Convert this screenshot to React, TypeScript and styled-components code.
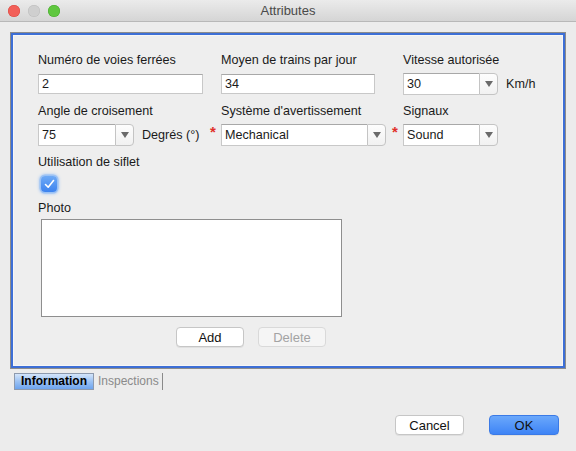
import * as React from 'react'
import styled, { createGlobalStyle } from 'styled-components'

const GlobalStyle = createGlobalStyle`
    html, body {
        margin: 0;
        padding: 0;
        background: #ececec;
    }
    body {
        font-family: 'Liberation Sans', Arial, sans-serif;
        font-size: 12.6px;
        color: #1a1a1a;
    }
`

const Window = styled.div`
    width: 576px;
    height: 451px;
    display: flex;
    flex-direction: column;
    background: #ececec;
    overflow: hidden;
`

const TitleBar = styled.div`
    position: relative;
    height: 22px;
    flex: none;
    display: flex;
    align-items: center;
    justify-content: center;
    background: linear-gradient(#ebebeb, #d5d5d5);
    border-bottom: 1px solid #b8b8b8;
    box-sizing: border-box;
    color: #4a4a4a;
    font-size: 13px;
`

const Lights = styled.div`
    position: absolute;
    left: 8px;
    top: 5px;
    display: flex;
    gap: 8px;
`

const Light = styled.span<{ $color: string; $edge: string }>`
    width: 12px;
    height: 12px;
    border-radius: 50%;
    background: ${(p) => p.$color};
    box-shadow: inset 0 0 0 0.5px ${(p) => p.$edge};
`

const Body = styled.div`
    flex: 1;
    display: flex;
    flex-direction: column;
    padding: 10px 10px 0 10px;
`

const Panel = styled.div`
    height: 337px;
    box-sizing: border-box;
    border: 1px solid #8c8c8c;
    box-shadow: inset 0 0 0 2px #3d6fd6, inset 0 0 0 3px #f6f6f6;
    padding: 19px 0 0 27px;
    background: #eeeeee;
    display: flex;
    flex-direction: column;
`

const FieldGrid = styled.div`
    display: grid;
    grid-template-columns: 183px 182px auto;
    row-gap: 8px;
`

const Field = styled.div`
    position: relative;
    display: flex;
    flex-direction: column;
`

const Label = styled.div<{ $gap?: number }>`
    height: 16px;
    line-height: 16px;
    margin-bottom: ${(p) => (p.$gap ?? 5)}px;
    white-space: nowrap;
`

const Row = styled.div`
    display: flex;
    align-items: center;
    gap: 8px;
`

const TextInput = styled.div<{ $width: number }>`
    width: ${(p) => p.$width}px;
    height: 20px;
    margin-top: 1px;
    box-sizing: border-box;
    background: #fff;
    border: 1px solid #c8c8c8;
    border-top-color: #a8a8a8;
    padding-left: 3px;
    line-height: 18px;
`

const Combo = styled.div<{ $width: number }>`
    width: ${(p) => p.$width}px;
    height: 22px;
    box-sizing: border-box;
    display: flex;
`

const ComboText = styled.div`
    flex: 1;
    background: #fff;
    border: 1px solid #c8c8c8;
    border-top-color: #a8a8a8;
    border-right: none;
    padding-left: 3px;
    line-height: 20px;
`

const ComboButton = styled.div`
    width: 19px;
    box-sizing: border-box;
    border: 1px solid #c4c4c4;
    border-radius: 0 4px 4px 0;
    background: linear-gradient(#fdfdfd, #f1f1f1);
    display: flex;
    align-items: center;
    justify-content: center;
    &::after {
        content: '';
        border-left: 4px solid transparent;
        border-right: 4px solid transparent;
        border-top: 6px solid #6a6a6a;
    }
`

const Required = styled.span`
    position: absolute;
    left: -11px;
    top: 21px;
    color: #e0302a;
    font-size: 15px;
    font-weight: bold;
    line-height: 15px;
`

const Unit = styled.span`
    white-space: nowrap;
`

const CheckBox = styled.div`
    width: 16px;
    height: 16px;
    margin: 1px 0 0 3px;
    border-radius: 4px;
    background: linear-gradient(#6eaaf6, #3d83ef);
    box-shadow: 0 0 0 1.5px #9bc2f5, 0 0 3px 2px #a9c9f3;
    display: flex;
    align-items: center;
    justify-content: center;
`

const PhotoField = styled(Field)`
    margin-top: 8px;
`

const PhotoBox = styled.div`
    width: 301px;
    height: 98px;
    margin: 3px 0 0 3px;
    box-sizing: border-box;
    background: #fff;
    border: 1px solid #8e8e8e;
`

const PhotoActions = styled.div`
    display: flex;
    gap: 14px;
    margin: 10px 0 0 138px;
`

const Button = styled.button<{ $width: number; $primary?: boolean }>`
    width: ${(p) => p.$width}px;
    height: 20px;
    box-sizing: border-box;
    border-radius: 4px;
    font-family: inherit;
    font-size: 13px;
    padding: 0;
    border: 1px solid ${(p) => (p.$primary ? '#3b7ae6' : '#c6c6c6')};
    background: ${(p) =>
        p.$primary ? 'linear-gradient(#6ba8fb, #3e84f6)' : '#fff'};
    color: #111;
    box-shadow: 0 1px 0 rgba(0, 0, 0, 0.06);

    &:disabled {
        background: #f5f5f5;
        border-color: #d9d9d9;
        color: #a3a3a3;
        box-shadow: none;
    }
`

const Tabs = styled.div`
    display: flex;
    align-items: stretch;
    height: 17px;
    margin: 4px 0 0 4px;
`

const Tab = styled.div<{ $active?: boolean }>`
    font-size: 12px;
    line-height: 15px;
    box-sizing: border-box;
    ${(p) =>
        p.$active
            ? `
        width: 80px;
        font-weight: bold;
        color: #000;
        border: 1px solid #8d9aae;
        background: linear-gradient(#d4e5fa, #9cc2f3 50%, #6ea4ee);
        text-align: center;
    `
            : `
        color: #8a8a8a;
        border-right: 1px solid #8a8a8a;
        padding: 1px 3px 0 4px;
    `}
`

const Footer = styled.div`
    margin-top: auto;
    height: 36px;
    display: flex;
    justify-content: flex-end;
    gap: 25px;
    padding-right: 7px;
`

const Check = () => (
    <svg width="11" height="10" viewBox="0 0 11 10">
        <path
            d="M1.5 5.5 L4.2 8.2 L9.5 1.5"
            fill="none"
            stroke="#fff"
            strokeWidth="1.6"
            strokeLinecap="round"
            strokeLinejoin="round"
        />
    </svg>
)

const ComboBox = ({ value, width }: { value: string; width: number }) => (
    <Combo $width={width}>
        <ComboText>{value}</ComboText>
        <ComboButton />
    </Combo>
)

export default function App() {
    return (
        <>
            <GlobalStyle />
            <Window>
                <TitleBar>
                    <Lights>
                        <Light $color="#f25f58" $edge="#d9463f" />
                        <Light $color="#cfcfcf" $edge="#bcbcbc" />
                        <Light $color="#5fc73f" $edge="#45a82c" />
                    </Lights>
                    Attributes
                </TitleBar>
                <Body>
                    <Panel>
                        <FieldGrid>
                            <Field>
                                <Label>Numéro de voies ferrées</Label>
                                <TextInput $width={165}>2</TextInput>
                            </Field>
                            <Field>
                                <Label>Moyen de trains par jour</Label>
                                <TextInput $width={154}>34</TextInput>
                            </Field>
                            <Field>
                                <Label>Vitesse autorisée</Label>
                                <Row>
                                    <ComboBox value="30" width={95} />
                                    <Unit>Km/h</Unit>
                                </Row>
                            </Field>
                            <Field>
                                <Label>Angle de croisement</Label>
                                <Row>
                                    <ComboBox value="75" width={96} />
                                    <Unit>Degrés (°)</Unit>
                                </Row>
                            </Field>
                            <Field>
                                <Label>Système d'avertissement</Label>
                                <Required>*</Required>
                                <ComboBox value="Mechanical" width={165} />
                            </Field>
                            <Field>
                                <Label>Signaux</Label>
                                <Required>*</Required>
                                <ComboBox value="Sound" width={95} />
                            </Field>
                            <Field>
                                <Label>Utilisation de siflet</Label>
                                <CheckBox>
                                    <Check />
                                </CheckBox>
                            </Field>
                        </FieldGrid>
                        <PhotoField>
                            <Label $gap={0}>Photo</Label>
                            <PhotoBox />
                        </PhotoField>
                        <PhotoActions>
                            <Button $width={68}>Add</Button>
                            <Button $width={68} disabled>
                                Delete
                            </Button>
                        </PhotoActions>
                    </Panel>
                    <Tabs>
                        <Tab $active>Information</Tab>
                        <Tab>Inspections</Tab>
                    </Tabs>
                    <Footer>
                        <Button $width={69}>Cancel</Button>
                        <Button $width={70} $primary>
                            OK
                        </Button>
                    </Footer>
                </Body>
            </Window>
        </>
    )
}
